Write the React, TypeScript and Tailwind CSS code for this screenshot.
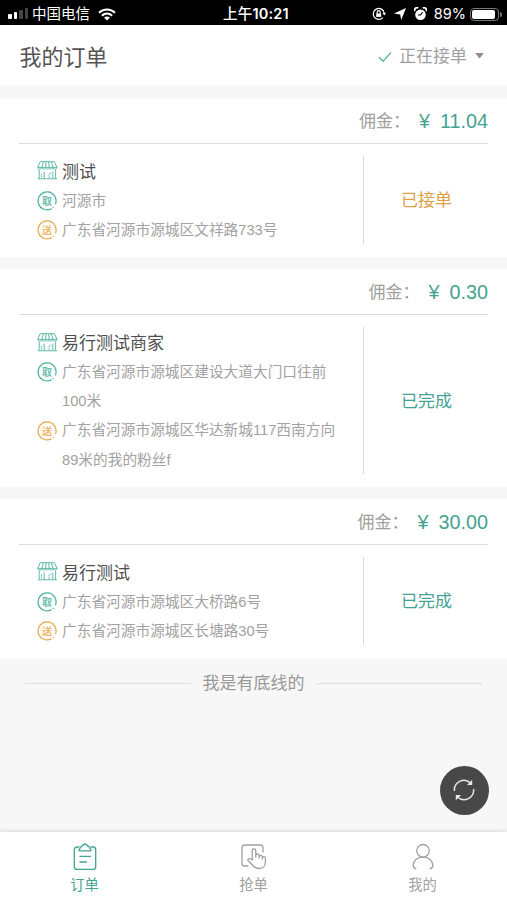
import React from "react";

type Order = {
  shop: string;
  fee: string;
  from: string[];
  to: string[];
  status: string;
  pending?: boolean;
};

const orders: Order[] = [
  { shop: "测试", fee: "11.04", from: ["河源市"], to: ["广东省河源市源城区文祥路733号"], status: "已接单", pending: true },
  {
    shop: "易行测试商家",
    fee: "0.30",
    from: ["广东省河源市源城区建设大道大门口往前", "100米"],
    to: ["广东省河源市源城区华达新城117西南方向", "89米的我的粉丝f"],
    status: "已完成",
  },
  { shop: "易行测试", fee: "30.00", from: ["广东省河源市源城区大桥路6号"], to: ["广东省河源市源城区长塘路30号"], status: "已完成" },
];

function ShopIcon() {
  return (
    <svg width="21" height="19" viewBox="0 0 21 19" fill="none" stroke="#62baa7" strokeWidth="1" strokeLinejoin="round">
      <path d="M3.2.7h14.2L20 6.4H.8L3.200.7Z" />
      <path d="M6.400.7 4.900 6.400M9.100.7 8.600 6.400M11.700.7l.5 5.700M14.300.7l1.700 5.700" />
      <path d="M.8 6.400c0 2.300 3.900 2.300 3.900 0 0 2.300 3.800 2.300 3.800 0 0 2.300 3.800 2.300 3.800 0 0 2.300 3.800 2.300 3.800 0 0 2.300 3.900 2.300 3.900 0" />
      <path d="M2.200 8.600v9M18.600 8.600v9M.8 17.800H20M7.200 10.500v7.300M5 12.500l-1.200 2M5.200 15l-1 1.500M13.800 11.500l-2.500 3M15.800 10.500v7M13 15.200l-1.500 1.800" />
    </svg>
  );
}

function Badge({ text, color }: { text: string; color: string }) {
  return (
    <svg width="20" height="20" viewBox="0 0 20 20" fill="none">
      <path d="M14.2 17.900A9 9 0 1 1 18.600 12.800" stroke={color} strokeWidth="1.25" strokeLinecap="round" />
      <path d="M15.800 16.900l.9-.9" stroke={color} strokeWidth="1.2" />
      <text x="10" y="13.700" textAnchor="middle" fontSize="10" fontWeight="700" fill={color} fillOpacity="0.85">
        {text}
      </text>
    </svg>
  );
}

function AddressRow({ label, color, lines }: { label: string; color: string; lines: string[] }) {
  return (
    <div className="flex">
      <div className="flex h-[29.3px] w-[25px] shrink-0 items-center pt-px">
        <Badge text={label} color={color} />
      </div>
      <div className="pt-px text-[14.7px] leading-[29.3px] whitespace-nowrap text-[#a2a2a2]">
        {lines.map((l, i) => (
          <div key={l} className={i === lines.length - 1 ? "-mb-px" : ""}>{l}</div>
        ))}
      </div>
    </div>
  );
}

function OrderCard({ o }: { o: Order }) {
  return (
    <section className="mb-3 bg-white px-[19px] pb-[13px]">
      <div className="flex h-[46px] items-center justify-end border-b border-[#dcdcdc] pt-[3px]">
        <span className="text-[17px] text-[#a0a0a0]">佣金：</span>
        <span className="ml-[9px] text-[19.8px] text-[#45a391]">¥</span>
        <span className="ml-[10px] text-[19.8px] text-[#45a391]">{o.fee}</span>
      </div>
      <div className="mt-[12.300px] flex">
        <div className="w-[345px] shrink-0 border-r border-[#dadada] pl-[18px]">
          <div className="flex h-[29.3px] items-center">
            <div className="w-[25px] shrink-0">
              <ShopIcon />
            </div>
            <span className="pt-1 text-[17px] leading-6 text-[#4f4f4f]">{o.shop}</span>
          </div>
          <AddressRow label="取" color="#4fb29d" lines={o.from} />
          <AddressRow label="送" color="#eba94d" lines={o.to} />
        </div>
        <div
          className={
            "flex flex-1 items-center justify-center pt-[2px] pl-px text-[17px] " +
            (o.pending ? "text-[#dda046]" : "text-[#45a391]")
          }
        >
          {o.status}
        </div>
      </div>
    </section>
  );
}

function StatusBar() {
  return (
    <div className="grid h-[25px] grid-cols-3 items-center bg-black px-2 pt-[3px] text-[14.5px] leading-5 text-white">
      <div className="flex items-center">
        <div className="flex h-[10px] items-end gap-[2px]">
          <i className="h-[5px] w-[3.5px] rounded-[1px] bg-white" />
          <i className="h-[7px] w-[3.5px] rounded-[1px] bg-white" />
          <i className="h-[9px] w-[3.5px] rounded-[1px] bg-[#444]" />
          <i className="h-[11px] w-[3.5px] rounded-[1px] bg-[#444]" />
        </div>
        <span className="ml-1 whitespace-nowrap">中国电信</span>
        <svg className="ml-2" width="18" height="13" viewBox="0 0 18 13" fill="none" stroke="white" strokeWidth="2.2">
          <path d="M1 4.7c4.5-4.3 11.5-4.3 16 0M3.9 7.8c3-2.8 7.2-2.8 10.2 0" />
          <path d="M6.1 9.7c1.7-1.5 4.1-1.5 5.8 0L9 12.6Z" fill="white" stroke="none" />
        </svg>
      </div>
      <div className="ml-[5px] text-center font-medium tracking-[0.2px] whitespace-nowrap">
        上午<span className="font-['Inter'] font-semibold">10:21</span>
      </div>
      <div className="-mr-[3px] flex items-center justify-end">
        <svg width="14" height="14" viewBox="0 0 14 14" fill="none" stroke="white" strokeWidth="1.2">
          <path d="M10.9 10.6A5.5 5.5 0 1 1 12.2 6" />
          <path d="M10.5 6h3.5l-1.7 2.6Z" fill="white" stroke="none" />
          <path d="M4.2 6.4h5v3.5h-5Z" fill="white" stroke="none" />
          <path d="M5.2 6.5V5.2a1.5 1.5 0 0 1 3 0v1.3" />
        </svg>
        <svg className="ml-2" width="12" height="12" viewBox="0 0 12 12" fill="white">
          <path d="M12 0 7.2 12 6.2 6.5 0 5.4Z" />
        </svg>
        <svg className="ml-2" width="13" height="14" viewBox="0 0 13 14">
          <circle cx="6.5" cy="7.7" r="5.3" fill="white" />
          <path d="M.8 4.2A2.4 2.4 0 0 1 4.2 1.1M12.2 4.2A2.4 2.4 0 0 0 8.8 1.1" fill="none" stroke="white" strokeWidth="1.8" />
          <path d="M8.7 5 6.5 8H4" fill="none" stroke="black" strokeWidth="1.1" />
        </svg>
        <span className="ml-[7px] font-['Inter'] text-[14.5px]">89%</span>
        <div className="ml-1 h-[13px] w-[29px] rounded-[4px] border border-[#777] p-[1px]">
          <div className="h-full w-[23px] rounded-[2px] bg-white" />
        </div>
        <i className="ml-[1px] h-[5px] w-[2px] rounded-r bg-[#777]" />
      </div>
    </div>
  );
}

function Tab({ label, active, children }: { label: string; active?: boolean; children: React.ReactNode }) {
  return (
    <div className={"flex flex-1 flex-col items-center pt-[10px] " + (active ? "text-[#45a391]" : "text-[#a0a0a0]")}>
      <svg width="28" height="30" viewBox="0 0 28 30" fill="none" stroke="currentColor" strokeWidth="1.3" strokeLinecap="round" strokeLinejoin="round">
        {children}
      </svg>
      <span className="mt-[3px] text-[14.3px] leading-5">{label}</span>
    </div>
  );
}

export default function App() {
  return (
    <div lang="zh-CN" className="relative flex h-[900px] w-[507px] flex-col overflow-hidden bg-[#f7f7f7] font-['Liberation_Sans','Noto_Sans_CJK_SC',sans-serif]">
      <StatusBar />
      <header className="mb-3 flex h-[61px] items-center justify-between bg-white pr-[23px] pl-[19.500px] pt-[3px]">
        <h1 className="text-[22px] text-[#555]">我的订单</h1>
        <div className="flex items-center text-[17px] text-[#a0a0a0]">
          <svg width="14" height="12" viewBox="0 0 15 12" fill="none" stroke="#55b5a0" strokeWidth="1.4">
            <path d="m1 6 4.4 4.5L14 1" />
          </svg>
          <span className="ml-[7px]">正在接单</span>
          <svg className="mb-[3px] ml-2" width="9" height="6" viewBox="0 0 10 7" fill="#8c8c8c">
            <path d="M0 0h10L5 6.500Z" />
          </svg>
        </div>
      </header>
      <main className="flex-1">
        {orders.map((o) => (
          <OrderCard key={o.fee} o={o} />
        ))}
        <div className="flex items-center px-[25px] text-[17px] text-[#999]">
          <i className="h-px flex-1 bg-[#dedede]" />
          <span className="mx-3 pt-px">我是有底线的</span>
          <i className="h-px flex-1 bg-[#dedede]" />
        </div>
      </main>
      <button className="absolute top-[766px] left-[440px] flex size-[49px] items-center justify-center rounded-full bg-[#484848] pr-px pb-[2px]">
        <svg width="24" height="24" viewBox="0 0 24 24" fill="none" stroke="#e8e8e8" strokeWidth="1.500">
          <path d="M2.400 13A9.600 9.600 0 0 1 18.500 5M21.600 11A9.600 9.600 0 0 1 5.500 19" />
          <path d="M20.200 1.800v5.200h-5.200ZM3.800 22.200v-5.200h5.200Z" fill="#e8e8e8" stroke="none" />
        </svg>
      </button>
      <nav className="flex h-[68px] bg-white shadow-[0_-1px_4px_rgba(0,0,0,0.13)]">
        <Tab label="订单" active>
          <path d="M8 5H6a2.7 2.7 0 0 0-2.7 2.7v17A2.7 2.7 0 0 0 6 27.4h16a2.7 2.7 0 0 0 2.7-2.7v-17A2.7 2.7 0 0 0 22 5h-2" />
          <path d="M10.5 4.2c1.4 0 1.7-2.2 3.5-2.2s2.1 2.2 3.5 2.2L20 7.8c.2.6 0 1-.6 1H8.6c-.6 0-.8-.4-.6-1ZM9 14.4h10.500M9 20h6.500" />
        </Tab>
        <Tab label="抢单">
          <path d="M8 24H4.600A2.600 2.600 0 0 1 2 21.400V5.600A2.600 2.600 0 0 1 4.600 3h15.800A2.600 2.600 0 0 1 23 5.600V10" />
          <path d="M12.200 18V8.800a1.800 1.800 0 0 1 3.600 0V15v-1.300a1.700 1.700 0 0 1 3.400 0V16v-1a1.600 1.600 0 0 1 3.200 0v2-.8a1.500 1.500 0 0 1 3 0V20c0 3.500-2.200 6.500-6.200 6.500-3 0-5-1-6.800-3.500l-4.300-4.500c-.9-1.200.6-2.500 1.900-1.800Z" />
        </Tab>
        <Tab label="我的">
          <circle cx="14" cy="8.800" r="6.300" />
          <path d="M6.800 26.800c-1.700-.7-2.800-2-2.600-3.800.4-4 3.600-7.900 9.800-7.900s9.400 3.900 9.800 7.900c.2 1.800-.9 3.100-2.600 3.800" />
        </Tab>
      </nav>
    </div>
  );
}
